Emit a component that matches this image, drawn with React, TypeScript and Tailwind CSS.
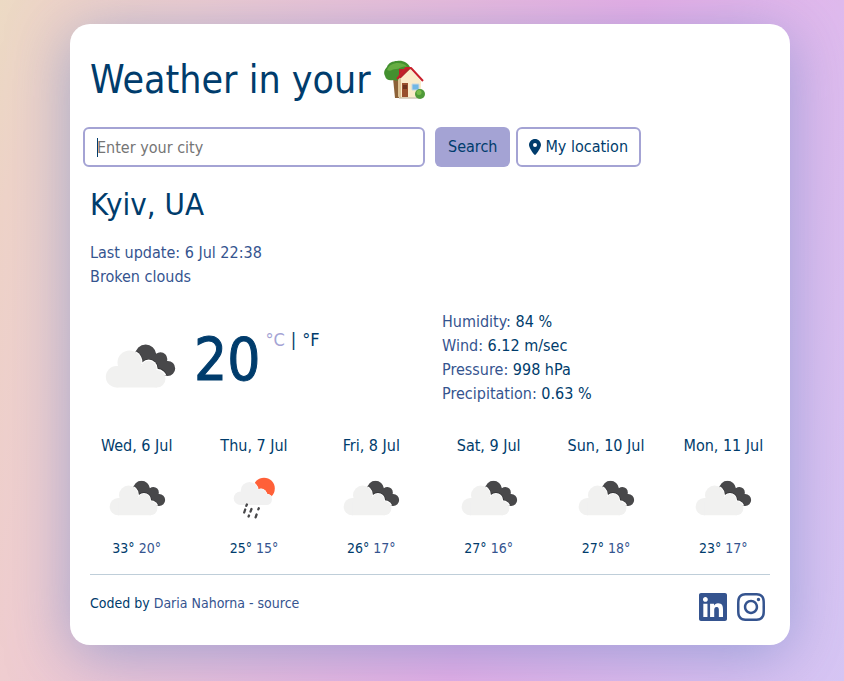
import { FaInstagram, FaLinkedin } from "react-icons/fa";
import { FaLocationDot } from "react-icons/fa6";

type Kind = "clouds" | "rain";

const days: { date: string; kind: Kind; max: number; min: number }[] = [
  { date: "Wed, 6 Jul", kind: "clouds", max: 33, min: 20 },
  { date: "Thu, 7 Jul", kind: "rain", max: 25, min: 15 },
  { date: "Fri, 8 Jul", kind: "clouds", max: 26, min: 17 },
  { date: "Sat, 9 Jul", kind: "clouds", max: 27, min: 16 },
  { date: "Sun, 10 Jul", kind: "clouds", max: 27, min: 18 },
  { date: "Mon, 11 Jul", kind: "clouds", max: 23, min: 17 },
];

const details = [
  ["Humidity", "84 %"],
  ["Wind", "6.12 m/sec"],
  ["Pressure", "998 hPa"],
  ["Precipitation", "0.63 %"],
];

function WeatherIcon({ kind, className }: { kind: Kind; className: string }) {
  if (kind === "rain") {
    return (
      <svg viewBox="0 0 80 80" className={className} aria-hidden="true">
        <circle cx="50" cy="30.5" r="10.8" fill="#ff6038" />
        <g fill="#fff">
          <circle cx="35.5" cy="32.5" r="9.2" />
          <circle cx="47" cy="36.8" r="6.2" />
          <circle cx="53" cy="41.5" r="5.8" />
        </g>
        <g fill="#f1f1f1">
          <circle cx="26.5" cy="40.2" r="6.8" />
          <circle cx="35.5" cy="32.7" r="8.8" />
          <circle cx="47" cy="36.5" r="5.7" />
          <circle cx="52.500" cy="41.5" r="5.5" />
          <path d="M26 34h20l6 3v10H26z" />
        </g>
        <path
          d="M32.9 46.5l-.6 1.4M31.2 51.5l-1 3M37.5 51l-1 2.6M44.8 50.2l-.5 1.200M35 57.5l-.4 1M42.6 56.5l-1 2.8"
          stroke="#48484a"
          strokeWidth="2.3"
          strokeLinecap="round"
        />
      </svg>
    );
  }
  return (
    <svg viewBox="0 0 100 100" className={className} aria-hidden="true">
      <defs>
        <clipPath id="dark-cloud">
          <circle cx="55.7" cy="39" r="10.5" />
          <circle cx="70.5" cy="43" r="6.8" />
          <circle cx="77.7" cy="52.4" r="7.5" />
          <path d="M56 39l15-1l8 20l-8 2H56z" />
        </clipPath>
      </defs>
      <g clipPath="url(#dark-cloud)">
        <path d="M40 20h50v50H40z" fill="#48484a" />
        <g fill="#303032">
          <circle cx="39.5" cy="46.5" r="13.6" />
          <circle cx="58.7" cy="52.5" r="9.6" />
          <circle cx="67" cy="62.7" r="10.6" />
        </g>
        <g fill="#fff">
          <circle cx="39.5" cy="46.5" r="13" />
          <circle cx="58.7" cy="52.5" r="8.9" />
          <circle cx="67" cy="62.7" r="9.9" />
        </g>
      </g>
      <g fill="#f1f1f0">
        <circle cx="26.5" cy="60.8" r="10.7" />
        <circle cx="39.5" cy="46.5" r="12" />
        <circle cx="58.7" cy="52.5" r="7.8" />
        <circle cx="66.7" cy="62.7" r="8.8" />
        <path d="M26.5 50H58l9 4v17.5H26.5z" />
      </g>
    </svg>
  );
}

function HouseIcon() {
  return (
    <svg viewBox="0 0 42 40" className="h-10 w-[42px]" aria-hidden="true">
      <path d="M10 18h5l1 20h-4z" fill="#8d6238" />
      <path d="M2 16C0 12 2 9 4 7C5 3 10 1 14 1C20 0 25 3 27 7C29 11 25 15 22 17C18 21 14 21 11 20C6 21 3 20 2 16z" fill="#43902f" />
      <path d="M4 10c2-5 6-7 11-7c4 0 7 1 9 4c-5-2-7 2-11 2s-5 3-9 1z" fill="#66ad42" />
      <path d="M16 9h5v7h-5z" fill="#b9232b" />
      <path d="M15 20L27 9l11 12v16l-21 1l-2-2z" fill="#faebc9" />
      <path d="M15 20l3-3v21l-3-2z" fill="#dcc294" />
      <path d="M14 19L23 8h5l12 13" fill="none" stroke="#c9202c" strokeWidth="2" strokeLinejoin="round" />
      <path d="M15 18l8-9h4L18 18z" fill="#b9232b" />
      <path d="M19 23h6v14h-6z" fill="#99502e" />
      <path d="M20 25h4v4h-4z" fill="#6e351f" />
      <path d="M29 24h7v6h-7z" fill="#71b7e6" stroke="#c9d7df" />
      <path d="M16 38h20" stroke="#b9aa91" />
      <circle cx="37" cy="34" r="5" fill="#4f9a39" />
      <circle cx="36" cy="32.5" r="2.5" fill="#79bc4a" />
    </svg>
  );
}

export default function App() {
  return (
    <div className="min-h-screen bg-[linear-gradient(106deg,#ecdac4_0%,#eed3c8_6%,#efcdd0_19%,#e8aee6_62%,#d6c6f4_100%)] py-6 pr-[54px] pl-[70px] font-['DejaVu_Sans_Condensed','DejaVu_Sans',sans-serif] text-[#003c6c]">
      <main className="mx-auto max-w-[720px] rounded-[20px] bg-white px-5 pt-8 pb-[22px] shadow-[0_10px_60px_rgba(110,140,200,0.6)]">
        <h1 className="flex items-center gap-3 text-[39px] leading-12">
          Weather in your <HouseIcon />
        </h1>

        <form className="mt-[23px] -ml-[7px] flex" onSubmit={(e) => e.preventDefault()}>
          <div className="relative w-[342px]">
            <input
              type="text"
              aria-label="City"
              placeholder="Enter your city"
              className="h-10 w-full rounded-md border-2 border-[#a4a3d4] px-3 outline-none placeholder:text-[#757575]"
            />
            <span className="absolute top-[11px] left-[14px] h-[19px] w-px bg-[#003c6c]" />
          </div>
          <button type="submit" className="ml-[10px] h-10 rounded-md bg-[#a4a3d4] px-[13px]">
            Search
          </button>
          <button
            type="button"
            className="ml-[6px] flex h-10 items-center gap-1 rounded-md border-2 border-[#a4a3d4] px-[11px]"
          >
            <FaLocationDot className="h-4 w-3" />
            My location
          </button>
        </form>

        <h2 className="mt-4 text-[31px] leading-[42px]">Kyiv, UA</h2>
        <ul className="mt-4 leading-6 text-[#35548f]">
          <li>Last update: 6 Jul 22:38</li>
          <li>Broken clouds</li>
        </ul>

        <section className="mt-[21px] grid grid-cols-[352px_1fr]">
          <div className="flex">
            <div className="pt-[6px]">
              <WeatherIcon kind="clouds" className="size-[100px]" />
            </div>
            <div className="flex pt-[10px] pl-1">
              <strong className="text-[58px] leading-[80px] font-medium [-webkit-text-stroke:1px]">20</strong>
              <div className="flex gap-[6px] pt-2 pl-[5px] text-[18px] leading-6">
                <a href="#celsius" className="text-[#a4a3d4]">°C</a>
                <span>|</span>
                <a href="#fahrenheit">°F</a>
              </div>
            </div>
          </div>
          <ul className="leading-6">
            {details.map(([name, value]) => (
              <li key={name}>
                <span className="text-[#35548f]">{name}:</span> {value}
              </li>
            ))}
          </ul>
        </section>

        <section className="-mx-3 mt-[18px] grid grid-cols-6">
          {days.map((day) => (
            <div key={day.date} className="flex flex-col items-center">
              <div className="leading-6 whitespace-nowrap">{day.date}</div>
              <WeatherIcon kind={day.kind} className="size-20" />
              <div className="text-sm leading-[21px]">
                {day.max}° <span className="text-[#35548f]">{day.min}°</span>
              </div>
            </div>
          ))}
        </section>

        <footer className="mt-[15px] flex justify-between border-t border-[#bfced9] pt-4">
          <div className="text-sm leading-6">
            Coded by{" "}
            <a href="#author" className="text-[#35548f]">Daria Nahorna</a>
            <a href="#source" className="text-[#35548f]"> - source</a>
          </div>
          <div className="flex gap-[6px] pr-[3px] text-[32px] text-[#35548f]">
            <a href="#linkedin" aria-label="LinkedIn"><FaLinkedin /></a>
            <a href="#instagram" aria-label="Instagram"><FaInstagram /></a>
          </div>
        </footer>
      </main>
    </div>
  );
}
